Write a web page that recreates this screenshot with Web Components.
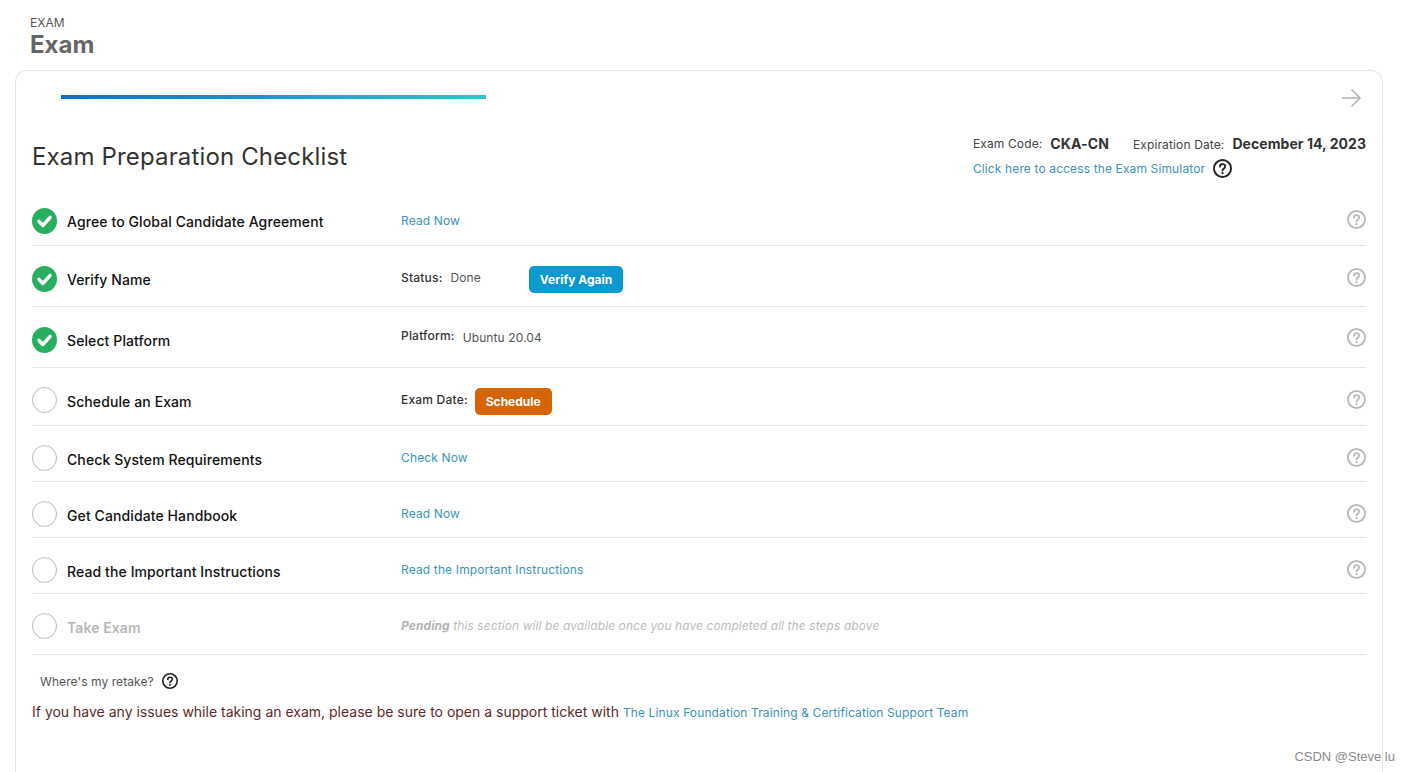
<!DOCTYPE html>
<html lang="en"><head><meta charset="utf-8"><title>Exam</title>
<style>
html,body{margin:0;height:772px;overflow:hidden;background:#fff;font-family:Inter,"Liberation Sans",sans-serif}
body{position:relative}
</style></head><body>
<exam-header eyebrow="EXAM" title="Exam"></exam-header>
<exam-card>
  <exam-progress></exam-progress>
  <exam-top></exam-top>
  <step-row title="Agree to Global Candidate Agreement" state="done" style="--h:61px;--pt:23px;--dy:1px;--tp:5px;--hp:2px"><a-link>Read Now</a-link></step-row>
  <step-row title="Verify Name" state="done" style="--h:61px;--pt:20px;--dy:0px;--tp:5px;--hp:2px"><detail-label label="Status:" value="Done" gap="8"></detail-label><action-btn color="#0b99cf" style="margin-left:48px">Verify Again</action-btn></step-row>
  <step-row title="Select Platform" state="done" style="--h:61px;--pt:20px;--dy:-3px;--tp:5px;--hp:1px"><detail-label label="Platform:" value="Ubuntu 20.04" gap="8" shift="2"></detail-label></step-row>
  <step-row title="Schedule an Exam" state="todo" style="--h:58px;--pt:19px;--dy:1px;--tp:6px;--hp:3px"><detail-label label="Exam Date:" gap="0"></detail-label><action-btn color="#d66405" style="margin-left:7px">Schedule</action-btn></step-row>
  <step-row title="Check System Requirements" state="todo" style="--h:56px;--pt:19px;--dy:1px;--tp:6px;--hp:3px"><a-link>Check Now</a-link></step-row>
  <step-row title="Get Candidate Handbook" state="todo" style="--h:56px;--pt:19px;--dy:1px;--tp:6px;--hp:3px"><a-link>Read Now</a-link></step-row>
  <step-row title="Read the Important Instructions" state="todo" style="--h:56px;--pt:19px;--dy:1px;--tp:6px;--hp:3px"><a-link>Read the Important Instructions</a-link></step-row>
  <step-row title="Take Exam" state="off" style="--h:61px;--pt:19px;--dy:1px;--tp:6px;--hp:3px"><pending-note></pending-note></step-row>
  <exam-foot></exam-foot>
</exam-card>
<water-mark>CSDN @Steve lu</water-mark>
<script>
function def(name,html){customElements.define(name,class extends HTMLElement{connectedCallback(){if(this.shadowRoot)return;const r=this.attachShadow({mode:'open'});r.innerHTML=typeof html==='function'?html(this):html;}})}
const q=(c,s,w)=>`<svg width="${s}" height="${s}" viewBox="0 0 20 20" fill="none" style="display:block"><circle cx="10" cy="10" r="${10-w/2}" stroke="${c}" stroke-width="${w}"/><path d="M7.300 8c0-1.600 1.200-2.600 2.800-2.600S12.800 6.400 12.800 7.900c0 1.100-.6 1.700-1.400 2.200-.9.600-1.400 1-1.400 2.100" stroke="${c}" stroke-width="${w}" stroke-linecap="round"/><circle cx="10" cy="14.900" r="1.200" fill="${c}"/></svg>`;
def('exam-header',e=>`<style>:host{display:block;padding:15px 0 0 30px;height:55px;box-sizing:content-box;color:#666}
.a{font-size:12px;line-height:15px;color:#555}.b{font-size:24px;line-height:29px;font-weight:700;color:#666}</style><div class="a">${e.getAttribute('eyebrow')}</div><div class="b">${e.getAttribute('title')}</div>`);
def('exam-card',`<style>:host{display:block;box-sizing:border-box;margin:0 27px 0 15px;height:702px;border:1px solid #e6e6e6;border-bottom:0;border-radius:12px 12px 0 0;padding:0 16px}</style><slot></slot>`);
def('exam-progress',`<style>:host{display:flex;justify-content:space-between;padding-top:24px;height:36px;box-sizing:content-box}
.bar{margin-left:29px;width:425px;height:4px;background:linear-gradient(90deg,#0a70cf,#2fc5c4)}
svg{display:block;margin:-8px 4px 0 0}</style><div class="bar"></div><svg width="22" height="22" viewBox="0 0 22 22" fill="none" stroke="#b4b4b4" stroke-width="1.500"><path d="M2 11h17.500M11.500 2.500l8.500 8.500-8.500 8.500"/></svg>`);
def('exam-top',`<style>:host{display:flex;justify-content:space-between;height:54px;align-items:flex-start;color:#333}
h1{margin:0;padding-top:11px;font-size:24px;line-height:30px;font-weight:400;color:#333;letter-spacing:.15px}
.r{font-size:12px;color:#444;letter-spacing:.13px}
.l1{display:flex;align-items:center;height:20px;padding-top:2px}.l1 b{font-size:14px;color:#333;font-weight:700}
.code{margin-left:8px;letter-spacing:.1px}.exp{margin-left:24px;padding-top:2px}.date{margin-left:8px;letter-spacing:.05px}
.l2{display:flex;align-items:center;margin-top:6px;color:#3d93b8}.l2 svg{margin-left:8px}</style>
<h1>Exam Preparation Checklist</h1><div class="r"><div class="l1"><span>Exam Code:</span><b class="code">CKA-CN</b><span class="exp">Expiration Date:</span><b class="date">December 14, 2023</b></div><div class="l2"><span>Click here to access the Exam Simulator</span>${q('#222',19,2)}</div></div>`);
def('step-row',e=>{const s=e.getAttribute('state');const off=s==='off';
 const ic=s==='done'?`<svg width="25" height="26" viewBox="0 0 26 26" preserveAspectRatio="none" style="display:block"><circle cx="13" cy="13" r="13" fill="#27ae60"/><path d="M7.300 13.400l4 4 7.500-8" fill="none" stroke="#fff" stroke-width="3.600" stroke-linecap="round" stroke-linejoin="round"/></svg>`:`<svg width="25" height="26" viewBox="0 0 25 26" style="display:block"><ellipse cx="12.500" cy="13" rx="12" ry="12.500" fill="#fff" stroke="#bdbdbd"/></svg>`;
 return `<style>:host{display:grid;grid-template-columns:35px 334px 1fr 19px;box-sizing:border-box;height:var(--h);border-bottom:1px solid #e6e6e6;padding-top:var(--pt);align-content:start}
.t{font-size:14px;line-height:18px;font-weight:500;padding-top:var(--tp);color:${off?'#b8b8b8':'#111'};${off?'font-weight:600;':''}letter-spacing:.1px}
.d{display:flex;align-items:flex-start;font-size:12px;line-height:26px;height:26px;margin-top:var(--dy)}
.h{padding-top:var(--hp)}</style><div>${ic}</div><div class="t">${e.getAttribute('title')}</div><div class="d"><slot></slot></div><div class="h">${off?'':q('#bbbbbb',19,2)}</div>`});
def('a-link',`<style>:host{display:inline-block;color:#3d93b8;font-size:12px;letter-spacing:.14px;line-height:24px}</style><slot></slot>`);
def('detail-label',e=>{const v=e.getAttribute('value');return `<style>:host{display:inline-flex;align-items:flex-start;font-size:12px;line-height:24px;letter-spacing:.2px}
b{font-weight:500;color:#333}span{color:#555;letter-spacing:.1px;margin-left:${e.getAttribute('gap')}px;position:relative;top:${e.getAttribute('shift')||0}px}</style><b>${e.getAttribute('label')}</b>${v?`<span>${v}</span>`:''}`});
def('action-btn',e=>`<style>:host{display:inline-flex;align-items:center;height:27px;padding:0 11px;border-radius:5px;background:${e.getAttribute('color')};color:#fff;font-size:12px;font-weight:700;line-height:27px}</style><slot></slot>`);
def('pending-note',`<style>:host{display:inline-block;font-size:12px;font-style:italic;color:#bdbdbd;letter-spacing:.09px;line-height:24px}b{font-weight:700;color:#b4b4b4}</style><b>Pending</b> this section will be available once you have completed all the steps above`);
def('exam-foot',`<style>:host{display:block}
.w{display:flex;align-items:center;gap:8px;padding:16px 0 0 8px;font-size:12px;color:#555;letter-spacing:.08px;height:20px}
.i{margin-top:11px;font-size:14px;line-height:20px;color:#5c2a2a}.i a{font-size:12px;color:#3d93b8;letter-spacing:.12px}</style>
<div class="w"><span>Where's my retake?</span>${q('#222',16,2)}</div><div class="i">If you have any issues while taking an exam, please be sure to open a support ticket with <a>The Linux Foundation Training &amp; Certification Support Team</a></div>`);
def('water-mark',`<style>:host{position:absolute;right:15px;top:748px;font-family:"Liberation Sans",sans-serif;font-size:13px;line-height:18px;color:#8c8c8c}</style><slot></slot>`);
</script>
</body></html>
